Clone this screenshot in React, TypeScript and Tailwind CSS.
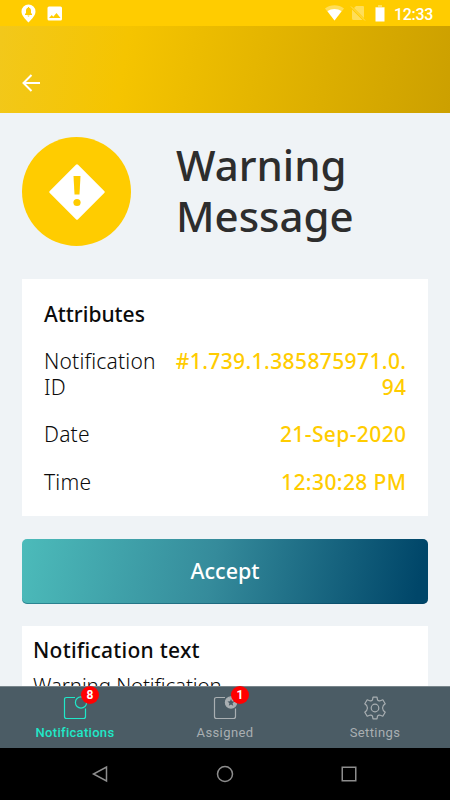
import React from 'react';

const attributes = [
  { label: 'Notification ID', value: ['#1.739.1.385875971.0.', '94'] },
  { label: 'Date', value: ['21-Sep-2020'] },
  { label: 'Time', value: ['12:30:28 PM'] },
];

const StatusBar: React.FC = () => (
  <div className="flex h-[26px] shrink-0 items-center bg-[#ffcc00] text-white">
    <svg className="ml-[21px] h-[19px] w-[15px]" viewBox="0 0 15 19">
      <path d="M7.5 .5A7 7 0 0 0 .5 7.5C.5 11 3.5 14.5 7.5 18.5C11.5 14.5 14.5 11 14.5 7.5A7 7 0 0 0 7.5 .5Z" fill="currentColor" />
      <path d="M4 11V10L5 9V6.500C5 5 5.800 4 7 3.700V3H8V3.700C9.200 4 10 5 10 6.500V9L11 10V11ZM6.500 11.500H8.500C8.500 12.800 6.500 12.800 6.500 11.500Z" fill="#ffcc00" />
    </svg>
    <svg className="ml-[11px] h-[15px] w-[16px]" viewBox="0 0 16 15">
      <rect x=".5" y=".5" width="14.5" height="14" rx="1.5" fill="currentColor" />
      <path d="M2 12L4.800 9L6.300 10.800L9.500 7L13.500 12Z" fill="#ffcc00" />
    </svg>
    <svg className="ml-[262px] h-[16px] w-[19px]" viewBox="0 0 19 16">
      <path d="M0 3.500C5.500 -.8 13.500 -.8 19 3.500L9.500 15.500Z" fill="currentColor" opacity=".35" />
      <path d="M2.500 6.200C6.500 3.200 12.500 3.200 16.500 6.200L9.500 15.500Z" fill="currentColor" />
    </svg>
    <svg className="ml-[6px] h-[16px] w-[16px]" viewBox="0 0 16 16">
      <path d="M6 1H13Q14 1 14 2V13L4 3ZM2 4.500L12.500 15H3.500Q2 15 2 13.500Z" fill="currentColor" opacity=".35" />
      <path d="M1 1.500L15 15.500" stroke="currentColor" opacity=".35" />
    </svg>
    <svg className="ml-[9px] h-[17px] w-[10px]" viewBox="0 0 10 17">
      <path d="M3 0H7V2H9.500V3H.5V2H3Z" fill="currentColor" opacity=".35" />
      <rect x=".5" y="2.500" width="9" height="14" fill="currentColor" />
    </svg>
    <span className="ml-[9px] mt-[3px] font-[Roboto] text-[16px] font-medium leading-none tracking-[-0.3px]">12:33</span>
  </div>
);

const Header: React.FC = () => (
  <header className="flex h-[87px] shrink-0 bg-[linear-gradient(100deg,#f2c81b_0%,#f5c400_28%,#cca000_100%)] pl-[20px] pt-[47px]">
    <svg className="h-[20px] w-[21px]" viewBox="0 0 21 20" fill="none" stroke="white" strokeWidth="2">
      <path d="M20 10H3.500M11.500 2L3.500 10L11.500 18" />
    </svg>
  </header>
);

const Badge: React.FC<{ count: number }> = ({ count }) => (
  <span className="absolute -top-[10px] left-[18px] h-[18px] w-[18px] rounded-full bg-[#f00] text-center text-[12px] font-bold leading-[18px] tracking-normal text-white">
    {count}
  </span>
);

const NavIcon: React.FC<{ starred?: boolean }> = ({ starred }) => (
  <svg className="h-[24px] w-[24px]" viewBox="0 0 24 24" fill="none" stroke="currentColor" strokeWidth="1.2">
    <path d="M12 1.500H3.500Q1.500 1.500 1.500 3.500V20.500Q1.500 22.500 3.500 22.500H20.500Q22.500 22.500 22.500 20.500V12.500" />
    <circle cx="18" cy="6.500" r="5.600" fill={starred ? 'currentColor' : 'none'} />
    {starred && (
      <path
        d="M18 3L19 5.300L21.500 5.500L19.600 7.200L20.200 9.700L18 8.400L15.800 9.700L16.400 7.200L14.500 5.500L17 5.300Z"
        fill="#4b5c65"
        stroke="none"
      />
    )}
  </svg>
);

const GearIcon: React.FC = () => (
  <svg className="h-[24px] w-[24px]" viewBox="0 0 24 24" fill="none" stroke="currentColor" strokeWidth="1.2" strokeLinejoin="round">
    <path d="M10 1.200H14L14.500 3.800Q15.500 5.300 17.300 4.700L19.800 3.800L22.200 7.700L20.300 9.500Q18.800 12 20.300 14.500L22.200 16.300L19.800 20.200L17.300 19.300Q15.500 18.700 14.500 20.200L14 22.800H10L9.500 20.200Q8.500 18.700 6.700 19.300L4.200 20.200L1.800 16.300L3.700 14.500Q5.200 12 3.700 9.500L1.800 7.700L4.200 3.800L6.700 4.700Q8.500 5.300 9.500 3.800Z" />
    <circle cx="12" cy="12" r="3.800" />
  </svg>
);

const App: React.FC = () => {
  return (
    <div className="flex h-[800px] w-[450px] flex-col overflow-hidden bg-[#eff3f6] font-['Noto_Sans',sans-serif] text-[#0b0b0b]">
      <StatusBar />
      <Header />

      {/* Message details */}
      <main className="min-h-0 flex-1 overflow-hidden px-[22px] pt-[24px]">
        <div className="flex h-[109px]">
          <div className="flex h-[109px] w-[109px] items-center justify-center rounded-full bg-[#ffcc00]">
            <svg className="h-[56px] w-[56px]" viewBox="0 0 56 56">
              <rect x="8" y="8" width="40" height="40" rx="1.5" transform="rotate(45 28 28)" fill="white" />
              <path d="M24.500 12H31.500L30.500 30.500H25.500Z" fill="#ffcc00" />
              <circle cx="28" cy="38.500" r="3.600" fill="#ffcc00" />
            </svg>
          </div>
          <h1 className="ml-[45px] mt-[2px] text-[42px] font-medium leading-[51px] text-[#2d2d2d]">
            Warning
            <br />
            Message
          </h1>
        </div>

        <section className="mt-[33px] h-[237px] bg-white px-[22px] pt-[22px]">
          <h2 className="text-[21px] font-medium leading-[26px]">Attributes</h2>
          {attributes.map((item) => (
            <div key={item.label} className="mt-[22px] flex justify-between text-[21px] leading-[25.5px]">
              <span className="w-[120px] font-light tracking-[0.2px]">{item.label}</span>
              <span className="-mr-[0.5px] text-right font-medium tracking-[0.4px] text-[#ffcc00]">
                {item.value.map((line) => (
                  <span key={line} className="block whitespace-nowrap">{line}</span>
                ))}
              </span>
            </div>
          ))}
        </section>

        <button className="mt-[23px] block h-[65px] w-full rounded-[5px] bg-[linear-gradient(100deg,#4cbbba_0%,#358b9b_47%,#004669_97%)] text-[21.5px] font-medium text-white shadow-[inset_0_-1px_0_rgba(0,60,90,0.4)]">
          Accept
        </button>

        <section className="mt-[22px] h-[100px] bg-white px-[11px] pt-[11px]">
          <h2 className="text-[21px] font-medium leading-[26px] tracking-[0.25px]">Notification text</h2>
          <p className="mt-[9px] text-[20.5px] font-light leading-[26px] tracking-[-0.1px]">Warning Notification</p>
        </section>
      </main>

      {/* Tabs */}
      <nav className="grid h-[62px] shrink-0 grid-cols-3 border-t border-[#78858b] bg-[#4b5c65] pt-[9px] font-[Roboto] text-[13px] tracking-[0.4px] text-[#a9afb2]">
        <div className="flex flex-col items-center text-[#20e8c8]">
          <div className="relative">
            <NavIcon />
            <Badge count={8} />
          </div>
          <span className="mt-[4px] font-medium leading-[17px] tracking-[0.3px]">Notifications</span>
        </div>
        <div className="flex flex-col items-center">
          <div className="relative">
            <NavIcon starred />
            <Badge count={1} />
          </div>
          <span className="mt-[4px] leading-[17px]">Assigned</span>
        </div>
        <div className="flex flex-col items-center">
          <GearIcon />
          <span className="mt-[4px] leading-[17px]">Settings</span>
        </div>
      </nav>

      {/* System navigation */}
      <div className="grid h-[52px] shrink-0 grid-cols-3 items-center justify-items-center bg-black text-[#8d8d8d]">
        <svg className="ml-[50px] h-[18px] w-[18px]" viewBox="0 0 18 18" fill="none" stroke="currentColor" strokeWidth="1.5">
          <path d="M15.500 2V16L2.500 9Z" />
        </svg>
        <svg className="h-[18px] w-[18px]" viewBox="0 0 18 18" fill="none" stroke="currentColor" strokeWidth="1.5">
          <circle cx="9" cy="9" r="7.5" />
        </svg>
        <svg className="mr-[52px] h-[18px] w-[18px]" viewBox="0 0 18 18" fill="none" stroke="currentColor" strokeWidth="1.5">
          <rect x="2.25" y="2.25" width="13.5" height="13.5" />
        </svg>
      </div>
    </div>
  );
};

export default App;
